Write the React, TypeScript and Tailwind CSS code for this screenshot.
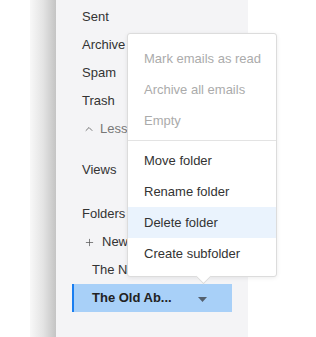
import { ChevronUp, Plus } from 'lucide-react';

const font = { fontFamily: '"Liberation Sans", Arial, sans-serif' };

function NavRow({ children, className = '' }: { children: React.ReactNode; className?: string }) {
  return <div className={`flex h-[28px] items-center pl-[26px] text-[13px] text-[#333] ${className}`}>{children}</div>;
}

function MenuItem({ label, disabled, active }: { label: string; disabled?: boolean; active?: boolean }) {
  return (
    <div
      className={`flex h-[31px] items-center pl-[16px] text-[13px] ${disabled ? 'text-[#ababab]' : 'text-[#333]'} ${
        active ? 'bg-[#eaf3fd]' : ''
      }`}
    >
      {label}
    </div>
  );
}

export default function App() {
  return (
    <div className="relative flex h-[337px] w-[316px] overflow-hidden bg-white" style={font}>
      <div className="w-[30px] bg-white" />
      <div className="w-[26px] bg-gradient-to-r from-[#f8f8f8] via-[#e4e4e4] to-[#c4c4c4]" />

      {/* Sidebar */}
      <div className="w-[192px] bg-[#f4f4f6] pt-[3px]">
        <NavRow>Sent</NavRow>
        <NavRow>Archive</NavRow>
        <NavRow>Spam</NavRow>
        <NavRow>Trash</NavRow>
        <NavRow className="text-[#777]">
          <ChevronUp size={12} strokeWidth={2} className="ml-[1px] mr-[5px]" />
          Less
        </NavRow>
        <NavRow className="mt-[13px]">Views</NavRow>
        <NavRow className="mt-[16px]">Folders</NavRow>
        <NavRow>
          <Plus size={11} strokeWidth={1.6} className="ml-[2px] mr-[7px] text-[#555]" />
          New
        </NavRow>
        <NavRow className="pl-[36px]">The New Folder</NavRow>
        <div className="ml-[16px] flex h-[28px] w-[160px] items-center border-l-2 border-[#1a7ef0] bg-[#a8d0f8] pl-[18px] text-[13px] font-bold text-[#222]">
          <span>The Old Ab...</span>
          <svg width="9" height="5" viewBox="0 0 9 5" className="ml-[26px] mt-[2px]">
            <path d="M0 0 L9 0 L4.5 5 Z" fill="#54606e" />
          </svg>
        </div>
      </div>

      {/* Context menu */}
      <div className="absolute left-[127px] top-[33px] w-[150px] rounded-[3px] border border-[#dcdcdc] bg-white py-[9px] pb-[7px] shadow-[0_1px_4px_rgba(0,0,0,0.08)]">
        <MenuItem label="Mark emails as read" disabled />
        <MenuItem label="Archive all emails" disabled />
        <MenuItem label="Empty" disabled />
        <div className="my-[4px] h-px bg-[#e3e3e3]" />
        <MenuItem label="Move folder" />
        <MenuItem label="Rename folder" />
        <MenuItem label="Delete folder" active />
        <MenuItem label="Create subfolder" />
        <div className="absolute bottom-[-6px] left-[70px] h-[11px] w-[11px] rotate-45 border-b border-r border-[#dcdcdc] bg-white" />
      </div>
    </div>
  );
}
